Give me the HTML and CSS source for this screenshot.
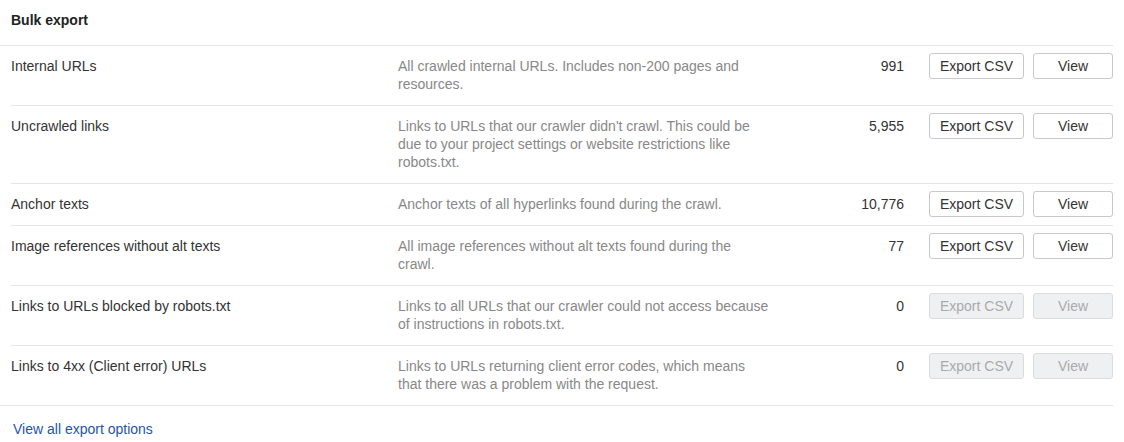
FILE: index.html
```html
<!DOCTYPE html>
<html>
<head>
<meta charset="utf-8">
<link rel="stylesheet" href="styles.css">
</head>
<body>
<div class="panel">
  <div class="header">Bulk export</div>
  <div class="rows">
    <div class="row">
      <div class="name">Internal URLs</div>
      <div class="desc">All crawled internal URLs. Includes non-200 pages and resources.</div>
      <div class="count">991</div>
      <div class="actions"><button class="btn btn-export">Export CSV</button><button class="btn btn-view">View</button></div>
    </div>
    <div class="row">
      <div class="name">Uncrawled links</div>
      <div class="desc">Links to URLs that our crawler didn't crawl. This could be due to your project settings or website restrictions like robots.txt.</div>
      <div class="count">5,955</div>
      <div class="actions"><button class="btn btn-export">Export CSV</button><button class="btn btn-view">View</button></div>
    </div>
    <div class="row">
      <div class="name">Anchor texts</div>
      <div class="desc">Anchor texts of all hyperlinks found during the crawl.</div>
      <div class="count">10,776</div>
      <div class="actions"><button class="btn btn-export">Export CSV</button><button class="btn btn-view">View</button></div>
    </div>
    <div class="row">
      <div class="name">Image references without alt texts</div>
      <div class="desc">All image references without alt texts found during the crawl.</div>
      <div class="count">77</div>
      <div class="actions"><button class="btn btn-export">Export CSV</button><button class="btn btn-view">View</button></div>
    </div>
    <div class="row">
      <div class="name">Links to URLs blocked by robots.txt</div>
      <div class="desc">Links to all URLs that our crawler could not access because of instructions in robots.txt.</div>
      <div class="count">0</div>
      <div class="actions"><button class="btn btn-export" disabled>Export CSV</button><button class="btn btn-view" disabled>View</button></div>
    </div>
    <div class="row">
      <div class="name">Links to 4xx (Client error) URLs</div>
      <div class="desc">Links to URLs returning client error codes, which means that there was a problem with the request.</div>
      <div class="count">0</div>
      <div class="actions"><button class="btn btn-export" disabled>Export CSV</button><button class="btn btn-view" disabled>View</button></div>
    </div>
  </div>
  <div class="footer"><a class="link" href="#">View all export options</a></div>
</div>
</body>
</html>
```
FILE: styles.css
```css
html, body {
  margin: 0;
  padding: 0;
  background: #fff;
}
body {
  font-family: "Liberation Sans", Arial, sans-serif;
  font-size: 14px;
  line-height: 18px;
  color: #333;
}
.panel {
  width: 1113px;
}
.header {
  height: 46px;
  box-sizing: border-box;
  padding: 11px 11px 0;
  font-weight: bold;
  border-bottom: 1px solid #e6e6e6;
  color: #222;
}
.rows {
  padding-left: 11px;
  border-bottom: 1px solid #e6e6e6;
}
.row {
  display: flex;
  align-items: flex-start;
  padding: 11px 0 12px;
  border-top: 1px solid #e6e6e6;
}
.row:first-child {
  border-top: none;
}
.name {
  width: 387px;
  flex: none;
  color: #333;
}
.desc {
  width: 373px;
  flex: none;
  color: #888;
}
.count {
  flex: 1;
  text-align: right;
  color: #333;
}
.actions {
  display: flex;
  gap: 9px;
  margin: -4px 0 -4px 25px;
}
.btn {
  height: 26px;
  box-sizing: border-box;
  margin: 0;
  padding: 0;
  font-family: "Liberation Sans", Arial, sans-serif;
  font-size: 14px;
  color: #333;
  background: #fff;
  border: 1px solid #c8c8c8;
  border-radius: 3px;
}
.btn-export { width: 95px; }
.btn-view { width: 80px; }
.btn:disabled {
  background: #eff0f2;
  border-color: #dcdcdc;
  color: #aaa;
}
.footer {
  padding: 14px 13px 0;
}
.link {
  color: #1f55a8;
  text-decoration: none;
}
```
